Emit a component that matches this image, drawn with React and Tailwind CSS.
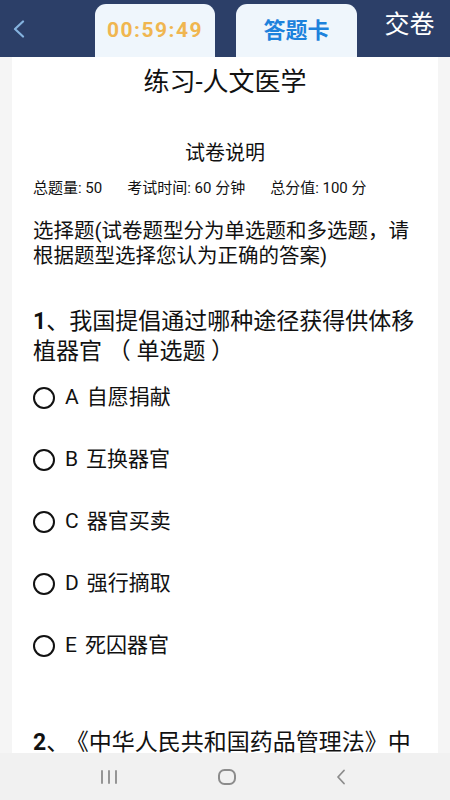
import React from "react";

const options = [
  { key: "A", text: "自愿捐献" },
  { key: "B", text: "互换器官" },
  { key: "C", text: "器官买卖" },
  { key: "D", text: "强行摘取" },
  { key: "E", text: "死囚器官" },
];

const font = { fontFamily: 'Roboto, "Noto Sans CJK SC", sans-serif' };

const Header = () => (
  <div className="flex h-[57px] items-end bg-[#2c3f68]">
    <div className="flex h-full w-[95px] items-center pl-[12px]">
      <svg width="14" height="18" viewBox="0 0 14 18" fill="none">
        <path d="M11 1.5L3 9l8 7.5" stroke="#85b3df" strokeWidth="2.2" strokeLinecap="round" strokeLinejoin="round" />
      </svg>
    </div>
    <div className="flex h-[53px] w-[120px] items-center justify-center rounded-t-[11px] bg-[#eff6fc] pt-[1px]">
      <span className="text-[21px] font-bold tracking-[1.5px] text-[#f0b650]">00:59:49</span>
    </div>
    <div className="w-[21px]" />
    <div className="flex h-[53px] w-[121px] items-center justify-center rounded-t-[11px] bg-[#eff6fc]">
      <span className="text-[22px] font-bold text-[#1d82dc]">答题卡</span>
    </div>
    <div className="flex h-full flex-1 items-center justify-center pb-[7px] pl-[12px]">
      <span className="text-[25px] text-white">交卷</span>
    </div>
  </div>
);

const NavBar = () => (
  <div className="flex h-[47px] items-center justify-between bg-[#f1f1f1] pl-[100px] pr-[104px]">
    <svg width="18" height="14" viewBox="0 0 18 14">
      <path d="M2 1v12M9 1v12M16 1v12" stroke="#8c8c8c" strokeWidth="1.8" strokeLinecap="round" />
    </svg>
    <svg width="18" height="16" viewBox="0 0 18 16" fill="none">
      <rect x="1" y="1" width="16" height="14" rx="5.5" stroke="#8c8c8c" strokeWidth="2" />
    </svg>
    <svg width="10" height="16" viewBox="0 0 10 16" fill="none">
      <path d="M8 1.5L2 8l6 6.5" stroke="#8c8c8c" strokeWidth="1.8" strokeLinecap="round" strokeLinejoin="round" />
    </svg>
  </div>
);

export default function App() {
  return (
    <div className="flex h-[800px] w-[450px] flex-col overflow-hidden bg-[#f5f5f5] text-[#111]" style={font}>
      <Header />
      <div className="h-[696px] overflow-hidden px-[12px]">
        <div className="h-full bg-white px-[21px]">
          <div className="text-center text-[26px] leading-[50px]">练习-人文医学</div>
          <div className="mt-[31px] text-center text-[20px] leading-[30px]">试卷说明</div>
          <div className="mt-[10px] flex text-[15px] leading-[20px]">
            <span>总题量: 50</span>
            <span className="ml-[25px]">考试时间: 60 分钟</span>
            <span className="ml-[25px]">总分值: 100 分</span>
          </div>
          <p className="mt-[21px] text-[20.5px] leading-[25px]">
            选择题(试卷题型分为单选题和多选题，请根据题型选择您认为正确的答案)
          </p>
          <p className="mt-[38px] text-[23px] leading-[30px]">
            <span className="font-bold">1</span>、我国提倡通过哪种途径获得供体移植器官 （ 单选题 ）
          </p>
          <div>
            {options.map((o) => (
              <div key={o.key} className="flex h-[62px] items-center">
                <span className="h-[22px] w-[22px] rounded-full border-2 border-[#111]" />
                <span className="ml-[10px] text-[21px]">{o.key}</span>
                <span className="ml-[8px] text-[21px]">{o.text}</span>
              </div>
            ))}
          </div>
          <p className="mt-[51px] text-[23px] leading-[30px]">
            <span className="font-bold">2</span>、<span className="ml-[8px]">《中华人民共和国药品管理法》中规定的假药是</span>
          </p>
        </div>
      </div>
      <NavBar />
    </div>
  );
}
